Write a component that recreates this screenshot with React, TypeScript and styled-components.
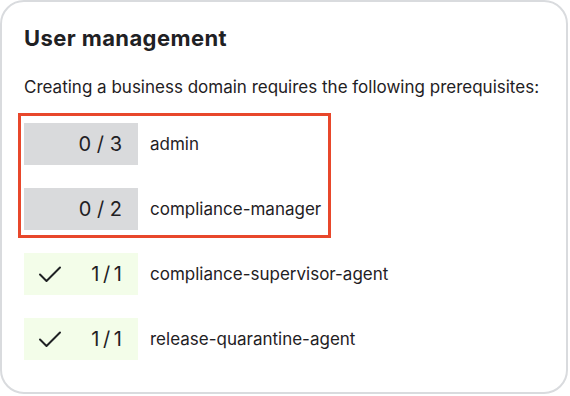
import React from "react";
import styled, { createGlobalStyle } from "styled-components";

const GlobalStyle = createGlobalStyle`
  html, body {
    margin: 0;
    padding: 0;
    background: #ffffff;
  }
  body {
    font-family: Inter, "Noto Sans", "Liberation Sans", sans-serif;
    color: #1f2124;
  }
`;

type Requirement = {
  name: string;
  have: number;
  need: number;
};

const missing: Requirement[] = [
  { name: "admin", have: 0, need: 3 },
  { name: "compliance-manager", have: 0, need: 2 },
];

const fulfilled: Requirement[] = [
  { name: "compliance-supervisor-agent", have: 1, need: 1 },
  { name: "release-quarantine-agent", have: 1, need: 1 },
];

const CheckIcon = () => (
  <svg width="24" height="18" viewBox="0 0 24 18" fill="none">
    <path
      d="M2 9.5 8.5 16 22 2.5"
      stroke="#1f2124"
      strokeWidth="2"
      strokeLinecap="round"
      strokeLinejoin="round"
    />
  </svg>
);

const RequirementRow = ({ item }: { item: Requirement }) => {
  const done = item.have >= item.need;
  return (
    <StRow>
      <StCount $done={done}>
        {done && <CheckIcon />}
        <StFraction>
          {item.have}
          {done ? "\u2009/\u2009" : " / "}
          {item.need}
        </StFraction>
      </StCount>
      <StLabel>{item.name}</StLabel>
    </StRow>
  );
};

const App = () => {
  return (
    <>
      <GlobalStyle />
      <StCard>
        <StTitle>User management</StTitle>
        <StDescription>
          Creating a business domain requires the following prerequisites:
        </StDescription>
        <StList>
          <StHighlight>
            {missing.map((item) => (
              <RequirementRow key={item.name} item={item} />
            ))}
          </StHighlight>
          {fulfilled.map((item) => (
            <RequirementRow key={item.name} item={item} />
          ))}
        </StList>
      </StCard>
    </>
  );
};

export default App;

const StCard = styled.div`
  box-sizing: border-box;
  width: 568px;
  height: 394px;
  border: 2px solid #d9dbde;
  border-radius: 24px;
  padding: 21px 22px 0 22px;
  display: flex;
  flex-direction: column;
`;

const StTitle = styled.h2`
  margin: 0;
  font-size: 22px;
  line-height: 30px;
  font-weight: 700;
  letter-spacing: 0.4px;
  color: #1f2124;
`;

const StDescription = styled.p`
  margin: 22px 0 0 0;
  font-size: 17px;
  line-height: 24px;
  font-weight: 400;
  color: #1f2124;
`;

const StList = styled.div`
  margin-top: 24px;
  display: flex;
  flex-direction: column;
  gap: 23px;
`;

const StHighlight = styled.div`
  align-self: flex-start;
  display: flex;
  flex-direction: column;
  gap: 23px;
  border: 3px solid #e8472b;
  padding: 7px 7px 5px 3px;
  margin: -10px 0 -8px -6px;
`;

const StRow = styled.div`
  display: flex;
  align-items: center;
  gap: 12px;
`;

const StCount = styled.div<{ $done: boolean }>`
  box-sizing: border-box;
  width: 114px;
  height: 42px;
  display: flex;
  align-items: center;
  justify-content: ${({ $done }) => ($done ? "space-between" : "flex-end")};
  padding: ${({ $done }) => ($done ? "0 16px 0 14px" : "0 16px 0 0")};
  background: ${({ $done }) => ($done ? "#f3fde9" : "#d9dadc")};
`;

const StFraction = styled.span`
  font-size: 20px;
  line-height: 24px;
  font-weight: 400;
  color: #1f2124;
  white-space: pre;
`;

const StLabel = styled.span`
  font-size: 17px;
  line-height: 24px;
  color: #1f2124;
`;
